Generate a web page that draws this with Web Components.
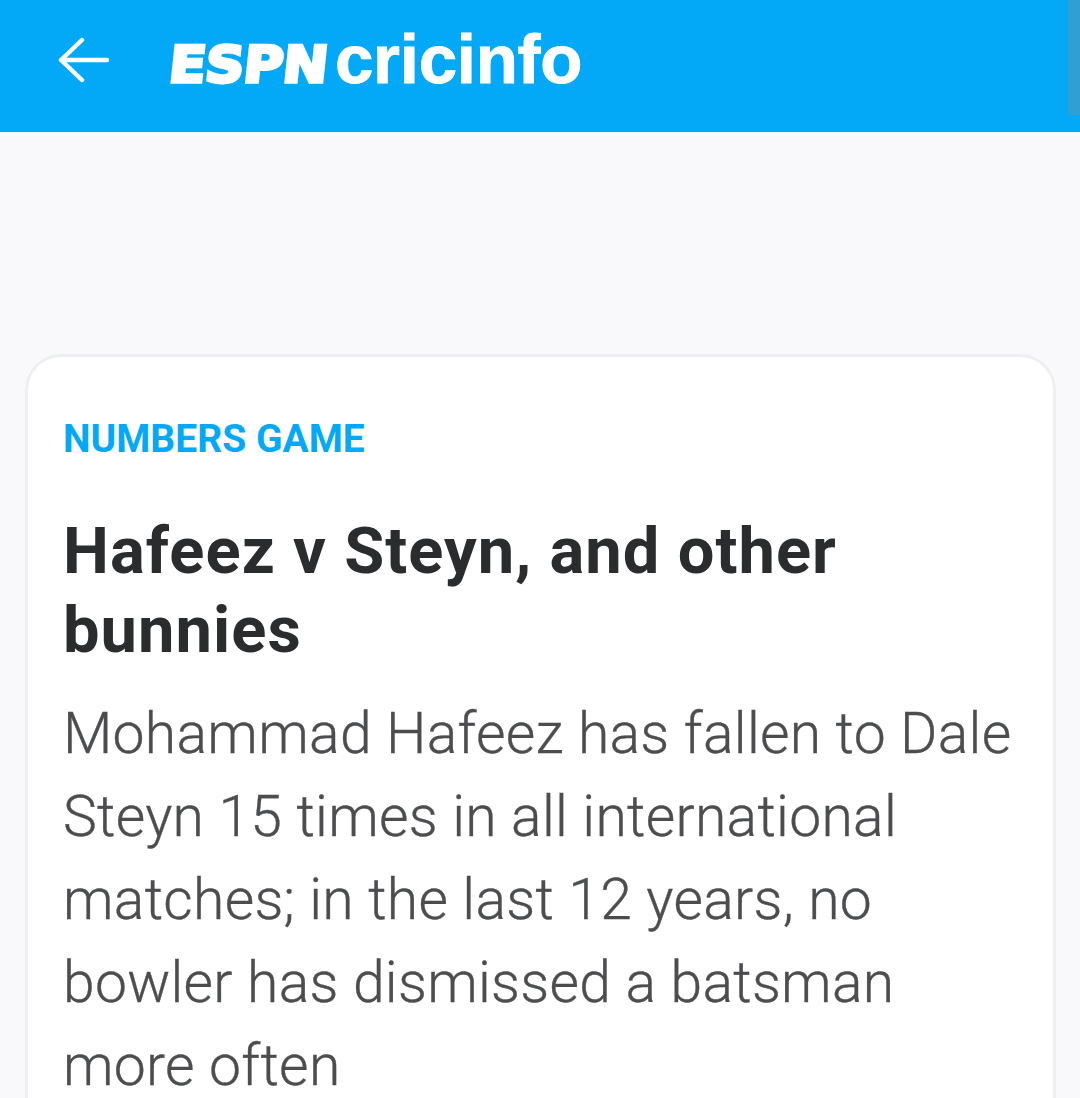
<!DOCTYPE html>
<html>
<head>
<meta charset="utf-8">
<style>
  html, body { margin: 0; height: 100%; overflow: hidden; background: #f9f9fb; }
  body { display: flex; flex-direction: column; }
</style>
</head>
<body>
<app-header></app-header>
<story-card kicker="NUMBERS GAME" headline="Hafeez v Steyn, and other bunnies">
  Mohammad Hafeez has fallen to Dale Steyn 15 times in all international matches; in the last 12 years, no bowler has dismissed a batsman more often
</story-card>

<script>
class AppHeader extends HTMLElement {
  constructor() {
    super();
    this.attachShadow({ mode: 'open' });
    this.shadowRoot.innerHTML = `
      <style>
        :host {
          display: flex;
          flex: none;
          align-items: center;
          position: relative;
          height: 132px;
          background: #03a9f6;
          padding: 0 0 12px 58px;
          box-sizing: border-box;
        }
        svg { display: block; flex: none; }
        .logo {
          display: flex;
          align-items: center;
          margin-left: 57px;
          color: #fff;
          font-weight: 700;
        }
        .espn {
          width: 158px;
          height: 41px;
          margin-top: 11px;
          font-family: "DejaVu Sans", sans-serif;
          font-size: 50px;
          line-height: 41px;
          letter-spacing: -.5px;
          white-space: nowrap;
          transform-origin: 0 100%;
          transform: skewX(-6deg) scaleX(1.08);
          -webkit-text-stroke: 3.4px #fff;
        }
        .cricinfo {
          margin-left: 10px;
          font-family: "Liberation Sans", Arial, sans-serif;
          font-size: 69px;
          line-height: 68px;
          letter-spacing: -.25px;
          -webkit-text-stroke: .9px #fff;
        }
        .thumb {
          position: absolute;
          right: 0;
          top: 0;
          width: 12px;
          height: 115px;
          background: #2f9fd4;
        }
      </style>
      <svg width="52" height="46" viewBox="0 0 52 46" fill="none" stroke="#fff" stroke-width="4.4" stroke-linecap="round" stroke-linejoin="round">
        <path d="M49 23H3M24 3 3 23l21 20"/>
      </svg>
      <div class="logo">
        <div class="espn">ESPN</div>
        <div class="cricinfo">cricinfo</div>
      </div>
      <div class="thumb"></div>
    `;
  }
}

class StoryCard extends HTMLElement {
  constructor() {
    super();
    this.attachShadow({ mode: 'open' });
    this.shadowRoot.innerHTML = `
      <style>
        :host {
          display: block;
          flex: 1;
          min-height: 0;
          margin: 222px 24px 0 25px;
          padding: 60px 36px 0 35px;
          background: #fff;
          border: 3px solid #eeeff1;
          border-bottom: 0;
          border-radius: 36px 36px 0 0;
          font-family: Roboto, "Liberation Sans", sans-serif;
        }
        .kicker {
          color: #03a9f6;
          font-size: 39px;
          line-height: 44px;
          font-weight: 700;
        }
        h2 {
          margin: 51px 0 0;
          color: #2b2c2e;
          font-size: 65px;
          line-height: 79px;
          font-weight: 700;
          letter-spacing: 1.05px;
        }
        p {
          /* the last line box hangs under the fold, its letters do not */
          margin: 22px 0 -14px;
          color: #4c4d4f;
          font-size: 57px;
          line-height: 83px;
          font-weight: 300;
          letter-spacing: .3px;
          -webkit-text-stroke: .35px #4c4d4f;
        }
      </style>
      <div class="kicker"></div>
      <h2></h2>
      <p><slot></slot></p>
    `;
  }

  connectedCallback() {
    this.shadowRoot.querySelector('.kicker').textContent = this.getAttribute('kicker');
    this.shadowRoot.querySelector('h2').textContent = this.getAttribute('headline');
  }
}

customElements.define('app-header', AppHeader);
customElements.define('story-card', StoryCard);
</script>
</body>
</html>
